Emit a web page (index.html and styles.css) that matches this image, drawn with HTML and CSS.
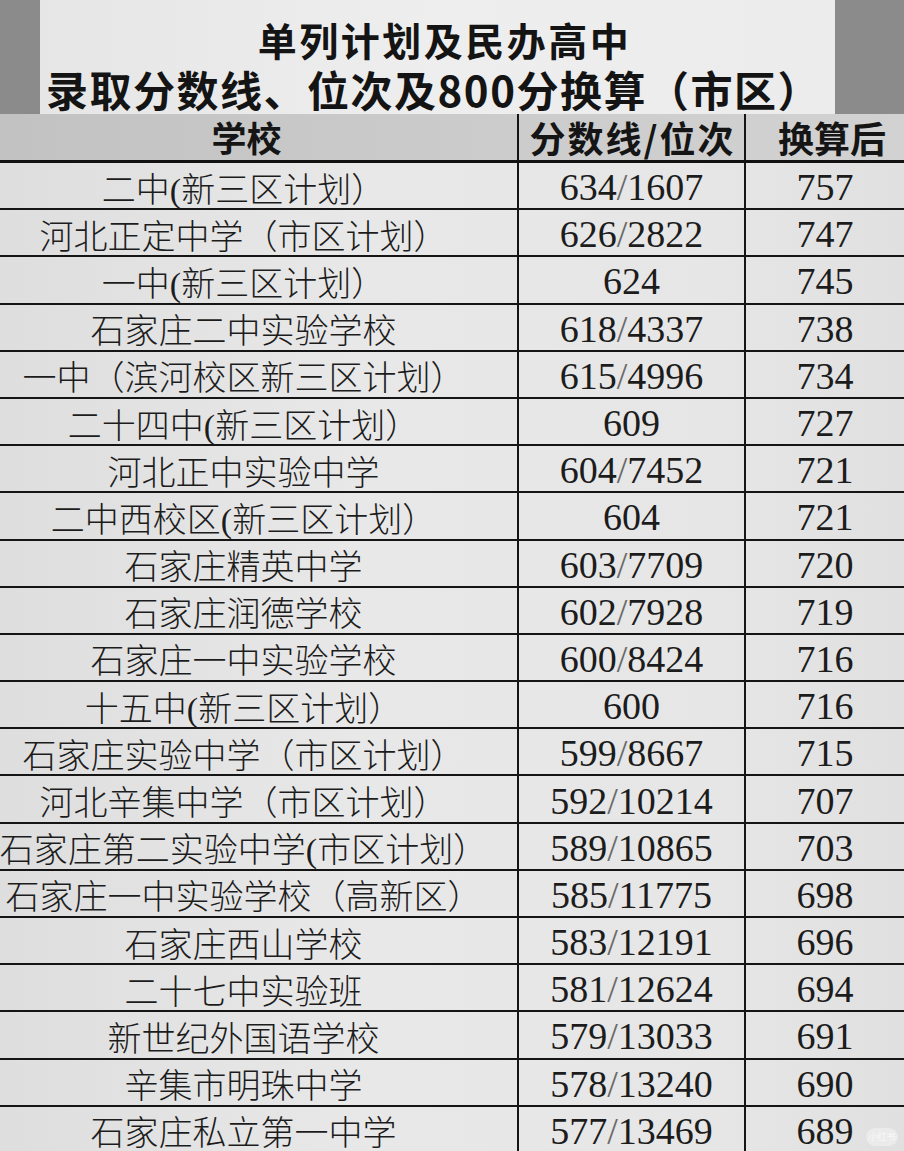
FILE: index.html
```html
<!DOCTYPE html>
<html lang="zh-CN">
<head>
<meta charset="utf-8">
<title>单列计划及民办高中录取分数线</title>
<link rel="stylesheet" href="styles.css">
</head>
<body>
<div class="page">
  <div class="title-box">
    <div class="title-line t1">单列计划及民办高中</div>
    <div class="title-line t2">录取分数线、位次及800分换算（市区）</div>
  </div>
  <div class="table">
    <div class="row head">
      <div class="cell c1">学校</div>
      <div class="cell c2">分数线/位次</div>
      <div class="cell c3">换算后</div>
    </div>
    <div class="row"><div class="cell c1">二中(新三区计划）</div><div class="cell c2">634<span class="sl">/</span>1607</div><div class="cell c3">757</div></div>
    <div class="row"><div class="cell c1">河北正定中学（市区计划）</div><div class="cell c2">626<span class="sl">/</span>2822</div><div class="cell c3">747</div></div>
    <div class="row"><div class="cell c1">一中(新三区计划）</div><div class="cell c2">624</div><div class="cell c3">745</div></div>
    <div class="row"><div class="cell c1">石家庄二中实验学校</div><div class="cell c2">618<span class="sl">/</span>4337</div><div class="cell c3">738</div></div>
    <div class="row"><div class="cell c1">一中（滨河校区新三区计划）</div><div class="cell c2">615<span class="sl">/</span>4996</div><div class="cell c3">734</div></div>
    <div class="row"><div class="cell c1">二十四中(新三区计划）</div><div class="cell c2">609</div><div class="cell c3">727</div></div>
    <div class="row"><div class="cell c1">河北正中实验中学</div><div class="cell c2">604<span class="sl">/</span>7452</div><div class="cell c3">721</div></div>
    <div class="row"><div class="cell c1">二中西校区(新三区计划）</div><div class="cell c2">604</div><div class="cell c3">721</div></div>
    <div class="row"><div class="cell c1">石家庄精英中学</div><div class="cell c2">603<span class="sl">/</span>7709</div><div class="cell c3">720</div></div>
    <div class="row"><div class="cell c1">石家庄润德学校</div><div class="cell c2">602<span class="sl">/</span>7928</div><div class="cell c3">719</div></div>
    <div class="row"><div class="cell c1">石家庄一中实验学校</div><div class="cell c2">600<span class="sl">/</span>8424</div><div class="cell c3">716</div></div>
    <div class="row"><div class="cell c1">十五中(新三区计划）</div><div class="cell c2">600</div><div class="cell c3">716</div></div>
    <div class="row"><div class="cell c1">石家庄实验中学（市区计划）</div><div class="cell c2">599<span class="sl">/</span>8667</div><div class="cell c3">715</div></div>
    <div class="row"><div class="cell c1">河北辛集中学（市区计划）</div><div class="cell c2">592<span class="sl">/</span>10214</div><div class="cell c3">707</div></div>
    <div class="row"><div class="cell c1">石家庄第二实验中学(市区计划）</div><div class="cell c2">589<span class="sl">/</span>10865</div><div class="cell c3">703</div></div>
    <div class="row"><div class="cell c1">石家庄一中实验学校（高新区）</div><div class="cell c2">585<span class="sl">/</span>11775</div><div class="cell c3">698</div></div>
    <div class="row"><div class="cell c1">石家庄西山学校</div><div class="cell c2">583<span class="sl">/</span>12191</div><div class="cell c3">696</div></div>
    <div class="row"><div class="cell c1">二十七中实验班</div><div class="cell c2">581<span class="sl">/</span>12624</div><div class="cell c3">694</div></div>
    <div class="row"><div class="cell c1">新世纪外国语学校</div><div class="cell c2">579<span class="sl">/</span>13033</div><div class="cell c3">691</div></div>
    <div class="row"><div class="cell c1">辛集市明珠中学</div><div class="cell c2">578<span class="sl">/</span>13240</div><div class="cell c3">690</div></div>
    <div class="row"><div class="cell c1">石家庄私立第一中学</div><div class="cell c2">577<span class="sl">/</span>13469</div><div class="cell c3">689</div></div>
  </div>
  <div class="watermark">小红书</div>
</div>
</body>
</html>
```

FILE: styles.css
```css
html, body {
  margin: 0;
  padding: 0;
  overflow: hidden;
  height: 100%;
}
body {
  background: #8b8b8b;
}
.page {
  position: relative;
  width: 904px;
  height: 1151px;
  overflow: hidden;
  background: #8b8b8b;
}
.title-box {
  margin-left: 40px;
  width: 795px;
  height: 114px;
  box-sizing: border-box;
  padding-top: 14px;
  background: linear-gradient(90deg, #e6e6e6, #eeeeee 50%, #ececec);
  display: flex;
  flex-direction: column;
  align-items: center;
  font-family: "Noto Sans CJK SC", sans-serif;
  font-weight: 700;
  color: #141414;
}
.title-line {
  line-height: 50px;
  height: 50px;
  font-size: 39px;
  white-space: nowrap;
}
.t1 { letter-spacing: 2.5px; padding-left: 14px; }
.t2 { font-size: 42px; letter-spacing: 1.5px; margin-left: -8px; }
.table {
  width: 904px;
}
.row {
  display: flex;
  height: 45.2px;
  border-bottom: 2px solid #151515;
  background: linear-gradient(90deg, #dedede, #e8e8e8 40%, #e6e6e6 80%, #e0e0e0);
  color: #1c1c1c;
}
.row.head {
  height: 46px;
  border-bottom: 3px solid #111;
  background: linear-gradient(90deg, #c2c2c2, #cbcbcb 50%, #d2d2d2);
  color: #151515;
}
.cell {
  display: flex;
  align-items: center;
  justify-content: center;
  white-space: nowrap;
}
.c1 {
  width: 519px;
  box-sizing: border-box;
  padding-right: 30px;
  padding-top: 3px;
  border-right: 2px solid #151515;
  font-family: "Liberation Serif", "Noto Sans CJK SC", serif;
  font-weight: 300;
  font-size: 34px;
}
.c2 {
  width: 227px;
  box-sizing: border-box;
  padding-top: 3px;
  border-right: 2px solid #151515;
  font-family: "Liberation Serif", "Noto Sans CJK SC", serif;
  font-size: 38px;
}
.c3 {
  flex: 1;
  padding-top: 3px;
  font-family: "Liberation Serif", "Noto Sans CJK SC", serif;
  font-size: 38px;
}
.head .cell {
  font-family: "Noto Sans CJK SC", sans-serif;
  font-weight: 700;
  font-size: 35px;
  padding-top: 0;
  line-height: 46px;
}
.head .c1 { padding-right: 24px; }
.head .c2 { font-size: 36px; letter-spacing: 2px; padding-left: 2px; }
.head .c3 { font-size: 36px; padding-left: 14px; }
.sl {
  color: #6a6a6a;
}
.watermark {
  position: absolute;
  left: 866px;
  top: 1128px;
  width: 32px;
  height: 18px;
  border-radius: 9px;
  background: rgba(255, 255, 255, 0.35);
  color: rgba(255, 255, 255, 0.7);
  font-family: "Noto Sans CJK SC", sans-serif;
  font-size: 9px;
  line-height: 18px;
  text-align: center;
}
```
